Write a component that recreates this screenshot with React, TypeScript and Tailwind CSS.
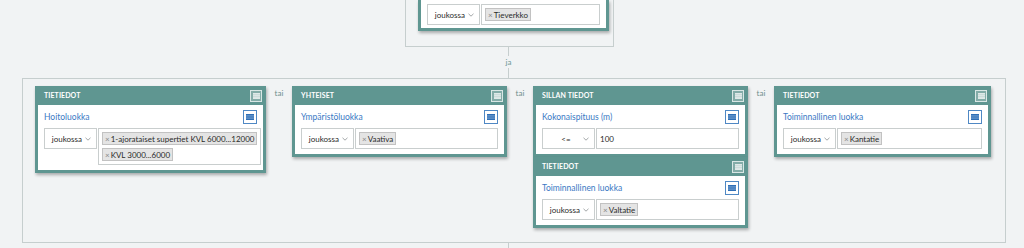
import React from "react";

function HeaderBtn() {
  return (
    <div className="w-[12px] h-[12px] border border-[#d9e7e5] bg-[#83aca8] flex items-center justify-center">
      <svg width="7" height="6" viewBox="0 0 7 6">
        <rect x="0" y="0" width="7" height="6" fill="#dfe9e8" />
        <rect x="0" y="1.5" width="7" height="0.6" fill="#b7cfcc" />
        <rect x="0" y="3.5" width="7" height="0.6" fill="#b7cfcc" />
      </svg>
    </div>
  );
}

function BlueBtn() {
  return (
    <div className="w-[14px] h-[14px] border border-[#4f88c4] bg-white flex items-center justify-center">
      <svg width="8" height="6" viewBox="0 0 8 6">
        <rect x="0" y="0" width="8" height="6" fill="#2f6fb6" />
        <rect x="0" y="1.6" width="8" height="0.7" fill="#9bbde0" />
        <rect x="0" y="3.7" width="8" height="0.7" fill="#9bbde0" />
      </svg>
    </div>
  );
}

function Chevron() {
  return (
    <svg width="6" height="4" viewBox="0 0 6 4" className="shrink-0">
      <path d="M0.5 0.8 L3 3.2 L5.5 0.8" fill="none" stroke="#8a8f90" strokeWidth="0.8" />
    </svg>
  );
}

function Select({ value, center }: { value: string; center?: boolean }) {
  return (
    <div className="w-[53px] h-[21px] shrink-0 bg-white border border-[#c9cece] flex items-center pr-[5px]">
      <span className={`flex-1 text-[#2b2b2b] text-[8px] ${center ? "text-center pl-[6px]" : "text-right pr-[3px]"}`}>{value}</span>
      <Chevron />
    </div>
  );
}

function Tag({ text }: { text: string }) {
  return (
    <div className="h-[13px] bg-[#e4e4e4] border border-[#c2c2c2] flex items-center px-[2px] text-[8px] text-[#2b2b2b] leading-none whitespace-nowrap">
      <span className="text-[#888] mr-[1px]">×</span>
      {text}
    </div>
  );
}

function TagBox({ tags }: { tags: string[] }) {
  return (
    <div className="flex-1 ml-px border border-[#c9cece] bg-white px-[3px] py-[3px] flex flex-wrap gap-[3px] content-start">
      {tags.map((t) => (
        <Tag key={t} text={t} />
      ))}
    </div>
  );
}

function Row({ select, tags, input }: { select: string; tags?: string[]; input?: string }) {
  return (
    <div className="flex">
      <Select value={select} center={!!input} />
      {tags ? (
        <TagBox tags={tags} />
      ) : (
        <div className="flex-1 ml-px h-[21px] border border-[#c9cece] bg-white flex items-center px-[3px] text-[8px] text-[#2b2b2b]">
          {input}
        </div>
      )}
    </div>
  );
}

function Field({ label, select, tags, input }: { label: string; select: string; tags?: string[]; input?: string }) {
  return (
    <div className="bg-white px-[6px] pt-[5px] pb-[5px]">
      <div className="flex items-center justify-between h-[14px]">
        <span className="text-[#3a79c4] text-[8.5px]">{label}</span>
        <BlueBtn />
      </div>
      <div className="mt-[4px]">
        <Row select={select} tags={tags} input={input} />
      </div>
    </div>
  );
}

function Header({ title }: { title: string }) {
  return (
    <div className="h-[19px] flex items-center justify-between pl-[6px] pr-px">
      <span className="text-white font-bold text-[7px] tracking-[0.1px]">{title}</span>
      <HeaderBtn />
    </div>
  );
}

function Card({ width, title, children }: { width: string; title: string; children: React.ReactNode }) {
  return (
    <div className={`${width} shrink-0 bg-[#5f9691] px-[3px] pb-[3px] shadow-[1px_2px_3px_rgba(0,0,0,0.3)]`}>
      <Header title={title} />
      {children}
    </div>
  );
}

function Tai() {
  return (
    <div className="w-[26px] shrink-0 flex justify-center pt-[1px]">
      <span className="text-[8px] text-[#6f8f8c]">tai</span>
    </div>
  );
}

export default function App() {
  return (
    <div className="w-[1024px] h-[248px] bg-[#f1f3f4] overflow-hidden flex flex-col font-['Lato',sans-serif]">
      {/* top group (its upper part lies above the view) */}
      <div className="ml-[405px] w-[209px] h-[47px] shrink-0 border-x border-b border-[#c6cece] pl-[12px] pr-[4px]">
        <div className="w-[191px] bg-[#5f9691] px-[3px] pb-[3px] shadow-[1px_2px_3px_rgba(0,0,0,0.3)]">
          <div className="bg-white px-[6px] pt-[4px] pb-[3px]">
            <Row select="joukossa" tags={["Tieverkko"]} />
          </div>
        </div>
      </div>
      {/* ja connector */}
      <div className="ml-[503px] w-[11px] h-[31px] shrink-0 flex flex-col items-center">
        <div className="w-px h-[9px] bg-[#c6cece]" />
        <span className="text-[8px] text-[#6f9995] leading-[12px]">ja</span>
        <div className="w-px flex-1 bg-[#c6cece]" />
      </div>
      {/* main group */}
      <div className="ml-[22px] w-[984px] h-[165px] shrink-0 border border-[#c6cece] pl-[12px] pt-[7px] flex items-start">
        <Card width="w-[231px]" title="TIETIEDOT">
          <Field label="Hoitoluokka" select="joukossa" tags={["1-ajorataiset supertiet KVL 6000...12000", "KVL 3000...6000"]} />
        </Card>
        <Tai />
        <Card width="w-[215px]" title="YHTEISET">
          <Field label="Ympäristöluokka" select="joukossa" tags={["Vaativa"]} />
        </Card>
        <Tai />
        <div className="w-[215px] shrink-0 flex flex-col">
          <Card width="w-[215px]" title="SILLAN TIEDOT">
            <Field label="Kokonaispituus (m)" select="<=" input="100" />
          </Card>
          <Card width="w-[215px]" title="TIETIEDOT">
            <Field label="Toiminnallinen luokka" select="joukossa" tags={["Valtatie"]} />
          </Card>
        </div>
        <Tai />
        <Card width="w-[217px]" title="TIETIEDOT">
          <Field label="Toiminnallinen luokka" select="joukossa" tags={["Kantatie"]} />
        </Card>
      </div>
      <div className="ml-[508px] w-px flex-1 bg-[#c6cece]" />
    </div>
  );
}
